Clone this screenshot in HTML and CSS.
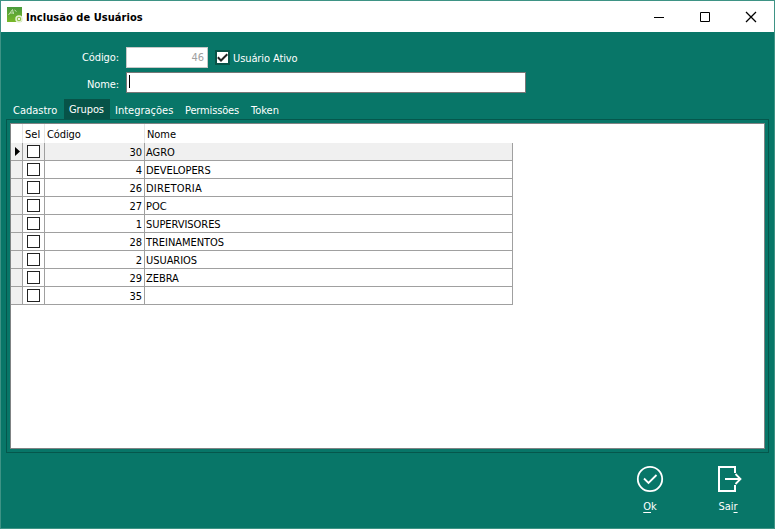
FILE: index.html
```html
<!DOCTYPE html>
<html lang="pt-BR">
<head>
<meta charset="utf-8">
<title>Inclusão de Usuários</title>
<link rel="stylesheet" href="styles.css">
</head>
<body>
<div class="window">
  <header class="titlebar">
    <svg class="app-icon" width="16" height="16" viewBox="0 0 16 16">
      <defs><linearGradient id="leaf" x1="0" y1="0" x2="0" y2="1"><stop offset="0" stop-color="#4a9a3c"/><stop offset="1" stop-color="#79b829"/></linearGradient></defs>
      <rect width="15" height="15" fill="url(#leaf)"/>
      <path d="M1.500 8 5.500 2.500 6.500 7M3 6h4M7.500 3l2 1.500" fill="none" stroke="#c5e0b2" stroke-width="1"/>
      <circle cx="12" cy="12" r="3" fill="#8fc34b" stroke="#e3f1d1" stroke-width="1.5"/>
      <circle cx="12" cy="12" r="1.1" fill="#fff"/>
    </svg>
    <h1 class="title">Inclusão de Usuários</h1>
    <svg class="controls" width="104" height="12" viewBox="0 0 104 12" fill="none" stroke="#000">
      <path d="M0 6.500h10M46.500 1.500h9v9h-9z"/>
      <path d="M92 1l10 10M102 1l-10 10" stroke-width="1.3"/>
    </svg>
  </header>
  <form class="fields">
    <div class="field code-field">
      <span class="label">Código:</span>
      <span class="input code">46</span>
      <span class="check"><svg width="11" height="11" viewBox="0 0 11 11"><path d="M.8 5.200 4 8.500 10.300 2.200" fill="none" stroke="#222" stroke-width="2"/></svg></span>
      <span class="ativo">Usuário Ativo</span>
    </div>
    <div class="field name-field">
      <span class="label">Nome:</span>
      <span class="input name"><i class="caret"></i></span>
    </div>
  </form>
  <nav class="tabs">
    <span class="tab">Cadastro</span><span class="tab active">Grupos</span><span class="tab integ">Integrações</span><span class="tab perm">Permissões</span><span class="tab">Token</span>
  </nav>
  <main class="panel">
    <div class="list">
      <div class="row head"><span class="ind"></span><span class="sel">Sel</span><span class="cod">Código</span><span class="nom">Nome</span></div>
      <div class="row current"><span class="ind"><svg width="5" height="9" viewBox="0 0 5 9"><path d="M0 0 5 4.500 0 9z"/></svg></span><span class="sel"><i class="box"></i></span><span class="cod">30</span><span class="nom">AGRO</span></div>
      <div class="row"><span class="ind"></span><span class="sel"><i class="box"></i></span><span class="cod">4</span><span class="nom">DEVELOPERS</span></div>
      <div class="row"><span class="ind"></span><span class="sel"><i class="box"></i></span><span class="cod">26</span><span class="nom wide">DIRETORIA</span></div>
      <div class="row"><span class="ind"></span><span class="sel"><i class="box"></i></span><span class="cod">27</span><span class="nom">POC</span></div>
      <div class="row"><span class="ind"></span><span class="sel"><i class="box"></i></span><span class="cod">1</span><span class="nom">SUPERVISORES</span></div>
      <div class="row"><span class="ind"></span><span class="sel"><i class="box"></i></span><span class="cod">28</span><span class="nom">TREINAMENTOS</span></div>
      <div class="row"><span class="ind"></span><span class="sel"><i class="box"></i></span><span class="cod">2</span><span class="nom">USUARIOS</span></div>
      <div class="row"><span class="ind"></span><span class="sel"><i class="box"></i></span><span class="cod">29</span><span class="nom">ZEBRA</span></div>
      <div class="row"><span class="ind"></span><span class="sel"><i class="box"></i></span><span class="cod">35</span><span class="nom"></span></div>
    </div>
  </main>
  <footer class="actions">
    <div class="action">
      <svg width="28" height="28" viewBox="0 0 28 28" fill="none" stroke="#fff" stroke-width="1.800"><circle cx="14" cy="14" r="12.200"/><path d="M8 13.500 12.500 18 20.500 10"/></svg>
      <span><u>O</u>k</span>
    </div>
    <div class="action">
      <svg width="28" height="28" viewBox="0 0 28 28" fill="none" stroke="#fff" stroke-width="2"><path d="M21 8V2H5v24h16v-6M11 14h15"/><path d="M21.500 9 26.500 14l-5 5" stroke-width="1.800"/></svg>
      <span>Sai<u>r</u></span>
    </div>
  </footer>
</div>
</body>
</html>
```
FILE: styles.css
```css
* { box-sizing: border-box; }
body {
  margin: 0;
  font: 11px/14px Tahoma, "DejaVu Sans Condensed", "DejaVu Sans", sans-serif;
  font-stretch: condensed;
  color: #000;
}
.window {
  width: 775px;
  height: 529px;
  display: flex;
  flex-direction: column;
  background: #087668;
  border: 1px solid #3e9385;
}
.titlebar {
  height: 31px;
  display: flex;
  align-items: center;
  background: #fff;
  padding: 0 16px 0 6px;
}
.app-icon { margin-top: -3px; }
.title {
  margin: 3px auto 0 3px;
  font-size: 11px;
  letter-spacing: 0.05px;
  white-space: nowrap;
}
.fields {
  display: flex;
  flex-direction: column;
  gap: 4px;
  padding-top: 15px;
  color: #fff;
}
.field { display: flex; height: 21px; align-items: center; }
.label { width: 118px; margin-right: 7px; text-align: right; letter-spacing: -0.1px; }
.name-field .label { padding-top: 4px; }
.input { height: 21px; background: #fff; border: 1px solid #c8c8c8; }
.code { width: 82px; padding: 3px 3px 0 0; text-align: right; color: #a0a0a0; }
.name { width: 400px; border-color: #777; padding: 2px; }
.caret { display: block; width: 1px; height: 13px; background: #000; }
.check {
  width: 15px;
  height: 15px;
  margin: 0 3px 0 7px;
  border: 2px solid #075348;
  background: #fff;
  display: flex;
}
.ativo { letter-spacing: -0.1px; padding-top: 2px; }
.tabs { display: flex; height: 20px; margin: 6px 0 0 7px; color: #fff; }
.tab { width: 56px; padding: 5px 0 0 5px; white-space: nowrap; }
.tab.active { width: 46px; background: #075348; padding-top: 4px; letter-spacing: -0.1px; }
.tab.integ { width: 70px; }
.tab.perm { width: 66px; letter-spacing: -0.15px; }
.panel {
  height: 334px;
  margin: 0 5px;
  padding: 3px;
  border: 1px solid #05574c;
}
.list { height: 326px; border: 1px solid #7f8384; background: #fff; }
.row {
  display: grid;
  grid-template-columns: 12px 22px 100px 368px;
  width: 502px;
  height: 18px;
}
.row > span { border-right: 1px solid #a0a0a0; border-bottom: 1px solid #a0a0a0; padding-top: 3px; }
.row .ind { background: #f0f0f0; padding: 4px 0 0 4px; }
.ind svg { display: block; }
.row .sel { padding: 2px 0 0 4px; }
.cod { text-align: right; padding-right: 2px; }
.nom { padding-left: 1px; letter-spacing: -0.05px; }
.nom.wide { letter-spacing: 0.2px; }
.current > span { background: #f0f0f0; }
.box { display: block; width: 13px; height: 13px; border: 1px solid #222; background: #fff; }
.head { height: 19px; }
.head > span { padding-top: 4px; border-bottom: 0; border-color: #e5e5e5; }
.row.head .ind { background: #fff; }
.row.head .sel { padding: 4px 0 0 2px; }
.head .cod { text-align: left; padding-left: 2px; letter-spacing: -0.1px; }
.head .nom { padding-left: 2px; border-right: 0; }
.actions { display: flex; justify-content: flex-end; gap: 14px; padding: 12px 14px 0 0; color: #fff; }
.action { width: 64px; display: flex; flex-direction: column; align-items: center; gap: 7px; }
u { text-underline-offset: 2px; }
```
